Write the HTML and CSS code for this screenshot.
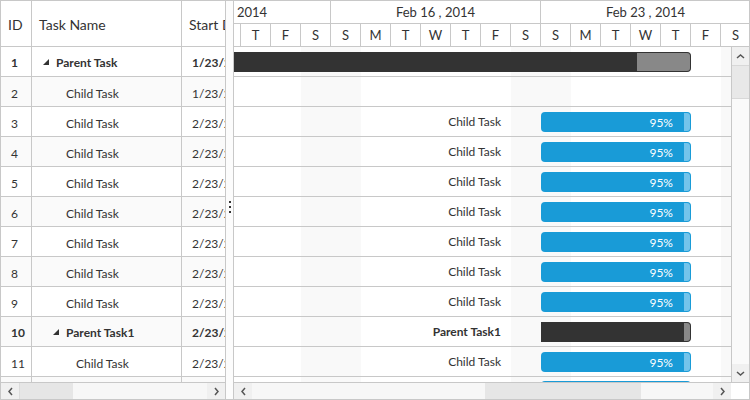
FILE: index.html
```html
<!DOCTYPE html>
<html>
<head>
<meta charset="utf-8">
<title>Gantt</title>
<link rel="stylesheet" href="styles.css">
</head>
<body>
<div class="gantt">
  <div class="grid-pane">
    <div class="grid-header">
      <div class="hcell c-id">ID</div>
      <div class="hcell c-name">Task Name</div>
      <div class="hcell c-start">Start Date</div>
    </div>
    <div class="grid-body">
      <div class="grow parent">
        <div class="cell c-id">1</div>
        <div class="cell c-name lvl0"><svg class="tri" width="6" height="6" viewBox="0 0 6 6"><polygon points="6,0 6,6 0,6"/></svg>Parent Task</div>
        <div class="cell c-start">1/23/2014</div>
      </div>
      <div class="grow alt">
        <div class="cell c-id">2</div>
        <div class="cell c-name lvl1 leaf">Child Task</div>
        <div class="cell c-start">1/23/2014</div>
      </div>
      <div class="grow">
        <div class="cell c-id">3</div>
        <div class="cell c-name lvl1 leaf">Child Task</div>
        <div class="cell c-start">2/23/2014</div>
      </div>
      <div class="grow alt">
        <div class="cell c-id">4</div>
        <div class="cell c-name lvl1 leaf">Child Task</div>
        <div class="cell c-start">2/23/2014</div>
      </div>
      <div class="grow">
        <div class="cell c-id">5</div>
        <div class="cell c-name lvl1 leaf">Child Task</div>
        <div class="cell c-start">2/23/2014</div>
      </div>
      <div class="grow alt">
        <div class="cell c-id">6</div>
        <div class="cell c-name lvl1 leaf">Child Task</div>
        <div class="cell c-start">2/23/2014</div>
      </div>
      <div class="grow">
        <div class="cell c-id">7</div>
        <div class="cell c-name lvl1 leaf">Child Task</div>
        <div class="cell c-start">2/23/2014</div>
      </div>
      <div class="grow alt">
        <div class="cell c-id">8</div>
        <div class="cell c-name lvl1 leaf">Child Task</div>
        <div class="cell c-start">2/23/2014</div>
      </div>
      <div class="grow">
        <div class="cell c-id">9</div>
        <div class="cell c-name lvl1 leaf">Child Task</div>
        <div class="cell c-start">2/23/2014</div>
      </div>
      <div class="grow alt parent">
        <div class="cell c-id">10</div>
        <div class="cell c-name lvl1"><svg class="tri" width="6" height="6" viewBox="0 0 6 6"><polygon points="6,0 6,6 0,6"/></svg>Parent Task1</div>
        <div class="cell c-start">2/23/2014</div>
      </div>
      <div class="grow">
        <div class="cell c-id">11</div>
        <div class="cell c-name lvl2 leaf">Child Task</div>
        <div class="cell c-start">2/23/2014</div>
      </div>
      <div class="grow alt">
        <div class="cell c-id">12</div>
        <div class="cell c-name lvl2 leaf">Child Task</div>
        <div class="cell c-start">2/23/2014</div>
      </div>
    </div>
    <div class="hscroll">
      <div class="sb-btn"><svg width="7" height="9" viewBox="0 0 7 9"><polyline points="5,1 2,4.5 5,8"/></svg></div>
      <div class="sb-thumb left-thumb"></div>
      <div class="sb-track"></div>
      <div class="sb-btn"><svg width="7" height="9" viewBox="0 0 7 9"><polyline points="2,1 5,4.5 2,8"/></svg></div>
    </div>
  </div>

  <div class="splitter">
    <div class="dots"><i></i><i></i><i></i></div>
  </div>

  <div class="chart-pane">
    <div class="timeline">
      <div class="tier top">
        <div class="tcell w-first">2014</div>
        <div class="tcell w-week">Feb 16 , 2014</div>
        <div class="tcell w-week">Feb 23 , 2014</div>
      </div>
      <div class="tier days">
        <div class="dcell d-first"></div>
        <div class="dcell">T</div>
        <div class="dcell">F</div>
        <div class="dcell">S</div>
        <div class="dcell">S</div>
        <div class="dcell">M</div>
        <div class="dcell">T</div>
        <div class="dcell">W</div>
        <div class="dcell">T</div>
        <div class="dcell">F</div>
        <div class="dcell">S</div>
        <div class="dcell">S</div>
        <div class="dcell">M</div>
        <div class="dcell">T</div>
        <div class="dcell">W</div>
        <div class="dcell">T</div>
        <div class="dcell">F</div>
        <div class="dcell">S</div>
      </div>
    </div>

    <div class="chart-body">
      <div class="crow">
        <div class="task summary" style="left:-20px;width:477px">
          <div class="prog" style="width:423px"></div><div class="rest"></div>
        </div>
      </div>
      <div class="crow"></div>
      <div class="crow">
        <div class="task" style="left:307px;width:150px">
          <span class="label">Child Task</span>
          <div class="prog" style="width:143px"><span class="pct">95%</span></div><div class="rest"></div>
        </div>
      </div>
      <div class="crow">
        <div class="task" style="left:307px;width:150px">
          <span class="label">Child Task</span>
          <div class="prog" style="width:143px"><span class="pct">95%</span></div><div class="rest"></div>
        </div>
      </div>
      <div class="crow">
        <div class="task" style="left:307px;width:150px">
          <span class="label">Child Task</span>
          <div class="prog" style="width:143px"><span class="pct">95%</span></div><div class="rest"></div>
        </div>
      </div>
      <div class="crow">
        <div class="task" style="left:307px;width:150px">
          <span class="label">Child Task</span>
          <div class="prog" style="width:143px"><span class="pct">95%</span></div><div class="rest"></div>
        </div>
      </div>
      <div class="crow">
        <div class="task" style="left:307px;width:150px">
          <span class="label">Child Task</span>
          <div class="prog" style="width:143px"><span class="pct">95%</span></div><div class="rest"></div>
        </div>
      </div>
      <div class="crow">
        <div class="task" style="left:307px;width:150px">
          <span class="label">Child Task</span>
          <div class="prog" style="width:143px"><span class="pct">95%</span></div><div class="rest"></div>
        </div>
      </div>
      <div class="crow">
        <div class="task" style="left:307px;width:150px">
          <span class="label">Child Task</span>
          <div class="prog" style="width:143px"><span class="pct">95%</span></div><div class="rest"></div>
        </div>
      </div>
      <div class="crow">
        <div class="task summary" style="left:307px;width:150px">
          <span class="label bold">Parent Task1</span>
          <div class="prog" style="width:143px"></div><div class="rest"></div>
        </div>
      </div>
      <div class="crow">
        <div class="task" style="left:307px;width:150px">
          <span class="label">Child Task</span>
          <div class="prog" style="width:143px"><span class="pct">95%</span></div><div class="rest"></div>
        </div>
      </div>
      <div class="crow">
        <div class="task peek" style="left:307px;width:150px">
          <span class="label">Child Task</span>
          <div class="prog" style="width:143px"><span class="pct">95%</span></div><div class="rest"></div>
        </div>
      </div>
    </div>

    <div class="vscroll">
      <div class="vs-btn"><svg width="9" height="7" viewBox="0 0 9 7"><polyline points="1,5 4.5,2 8,5"/></svg></div>
      <div class="vs-thumb"></div>
      <div class="vs-track"></div>
      <div class="vs-btn"><svg width="9" height="7" viewBox="0 0 9 7"><polyline points="1,2 4.5,5 8,2"/></svg></div>
    </div>

    <div class="hscroll chart-h">
      <div class="sb-btn"><svg width="7" height="9" viewBox="0 0 7 9"><polyline points="5,1 2,4.5 5,8"/></svg></div>
      <div class="sb-track track-a"></div>
      <div class="sb-thumb chart-thumb"></div>
      <div class="sb-track"></div>
      <div class="sb-btn"><svg width="7" height="9" viewBox="0 0 7 9"><polyline points="2,1 5,4.5 2,8"/></svg></div>
    </div>
    <div class="corner"></div>
  </div>
</div>
</body>
</html>
```

FILE: styles.css
```css
* { box-sizing: border-box; }
html, body { margin: 0; padding: 0; background: #fff; }
body {
  font-family: Lato, "Open Sans", sans-serif;
  color: #333;
}

.gantt {
  width: 750px;
  height: 400px;
  border: 1px solid #c8c8c8;
  display: flex;
  overflow: hidden;
}

/* ---------- grid pane ---------- */
.grid-pane {
  width: 225px;
  flex: none;
  border-right: 1px solid #c8c8c8;
  display: flex;
  flex-direction: column;
  overflow: hidden;
}
.grid-header {
  height: 46px;
  flex: none;
  display: flex;
  border-bottom: 1px solid #c8c8c8;
  font-size: 14px;
}
.hcell {
  display: flex;
  align-items: center;
  padding-left: 7px;
  padding-top: 1px;
  border-right: 1px solid #c8c8c8;
  white-space: nowrap;
  overflow: hidden;
  flex: none;
}
.c-id { width: 31px; }
.c-name { width: 150px; }
.c-start { width: 120px; border-right: none; }

.grid-body {
  flex: 1;
  overflow: hidden;
}
.grow {
  height: 30px;
  display: flex;
  border-bottom: 1px solid #c8c8c8;
  font-size: 12px;
}
.grow.alt { background: #fafafa; }
.grow.parent { font-weight: bold; }
.cell {
  display: flex;
  align-items: center;
  padding-left: 10px;
  padding-top: 3px;
  border-right: 1px solid #c8c8c8;
  white-space: nowrap;
  overflow: hidden;
  flex: none;
}
.grow.parent .cell { padding-top: 1px; }
.cell.c-start { border-right: none; }
.cell.c-name.lvl0 { padding-left: 11px; }
.cell.c-name.lvl1 { padding-left: 21px; }
.cell.c-name.lvl2 { padding-left: 31px; }
.cell.c-name.leaf.lvl1 { padding-left: 34px; }
.cell.c-name.leaf.lvl2 { padding-left: 44px; }
.tri {
  fill: #333;
  margin-right: 7px;
  flex: none;
}

/* ---------- scrollbars ---------- */
.hscroll {
  height: 17px;
  flex: none;
  display: flex;
  border-top: 1px solid #c8c8c8;
  background: #f7f7f7;
}
.sb-btn {
  width: 18px;
  flex: none;
  display: flex;
  align-items: center;
  justify-content: center;
  background: #f0f0f0;
}
.sb-btn svg, .vs-btn svg {
  fill: none;
  stroke: #555;
  stroke-width: 1.5;
}
.sb-track { flex: 1; background: #f7f7f7; }
.sb-thumb { background: #e6e6e6; flex: none; }
.left-thumb { width: 54px; border-left: 1px solid #dcdcdc; }
.track-a { flex: none; width: 233px; }
.chart-thumb { width: 156px; }

/* ---------- splitter ---------- */
.splitter {
  width: 7px;
  flex: none;
  background: #fcfcfc;
  display: flex;
  flex-direction: column;
  align-items: center;
  padding-top: 200px;
}
.dots {
  display: flex;
  flex-direction: column;
  gap: 3px;
}
.dots i {
  display: block;
  width: 2px;
  height: 2px;
  background: #333;
}

/* ---------- chart pane ---------- */
.chart-pane {
  flex: 1;
  border-left: 1px solid #c8c8c8;
  display: grid;
  grid-template-columns: 1fr 18px;
  grid-template-rows: 46px 1fr 17px;
  overflow: hidden;
  min-width: 0;
}
.timeline {
  grid-column: 1 / 3;
  border-bottom: 1px solid #c8c8c8;
  display: flex;
  flex-direction: column;
  overflow: hidden;
  font-size: 13px;
}
.tier {
  display: flex;
  flex: none;
  white-space: nowrap;
}
.tier.top {
  height: 23px;
  border-bottom: 1px solid #c8c8c8;
}
.tier.days { height: 22px; }
.tcell {
  flex: none;
  border-right: 1px solid #c8c8c8;
  display: flex;
  align-items: center;
  justify-content: center;
}
.w-first { width: 97px; justify-content: flex-start; padding-left: 3px; }
.w-week { width: 210px; }
.dcell {
  flex: none;
  width: 30px;
  border-right: 1px solid #c8c8c8;
  display: flex;
  align-items: center;
  justify-content: center;
}
.d-first { width: 7px; }

.chart-body {
  grid-column: 1;
  grid-row: 2;
  overflow: hidden;
  background-image: linear-gradient(90deg, transparent 67px, #f9f9f9 67px, #f9f9f9 127px, transparent 127px);
  background-size: 210px 100%;
  font-size: 12px;
}
.crow {
  height: 30px;
  border-bottom: 1px solid #c8c8c8;
  position: relative;
}
.task {
  position: absolute;
  top: 5px;
  height: 20px;
  display: flex;
  border-radius: 4px;
}
.task.peek { top: 4px; }
.task .prog {
  height: 100%;
  background: #199bd7;
  border-radius: 4px 0 0 4px;
  display: flex;
  align-items: center;
  justify-content: flex-end;
  padding-right: 11px;
  flex: none;
}
.task .rest {
  flex: 1;
  height: 100%;
  background: #74c4eb;
  border-radius: 0 4px 4px 0;
  border: 1px solid #199bd7;
  border-left: none;
}
.task.summary .prog { background: #333; }
.task.summary .rest { background: #888; border-color: #333; }
.task.summary .prog { border-radius: 0; }
.task .pct {
  color: #fff;
  font-size: 12px;
}
.label {
  position: absolute;
  right: calc(100% + 40px);
  top: 0;
  line-height: 20px;
  white-space: nowrap;
}
.label.bold { font-weight: bold; }

.vscroll {
  grid-column: 2;
  grid-row: 2;
  border-left: 1px solid #c8c8c8;
  display: flex;
  flex-direction: column;
  background: #fafafa;
}
.vs-btn {
  height: 18px;
  flex: none;
  display: flex;
  align-items: center;
  justify-content: center;
  background: #f0f0f0;
}
.vs-thumb {
  height: 34px;
  flex: none;
  background: #e8e8e8;
  border-top: 1px solid #d8d8d8;
  border-bottom: 1px solid #d8d8d8;
}
.vs-track { flex: 1; }

.chart-h { grid-column: 1; grid-row: 3; }
.corner {
  grid-column: 2;
  grid-row: 3;
  background: #fff;
  border-top: 1px solid #c8c8c8;
}
```
